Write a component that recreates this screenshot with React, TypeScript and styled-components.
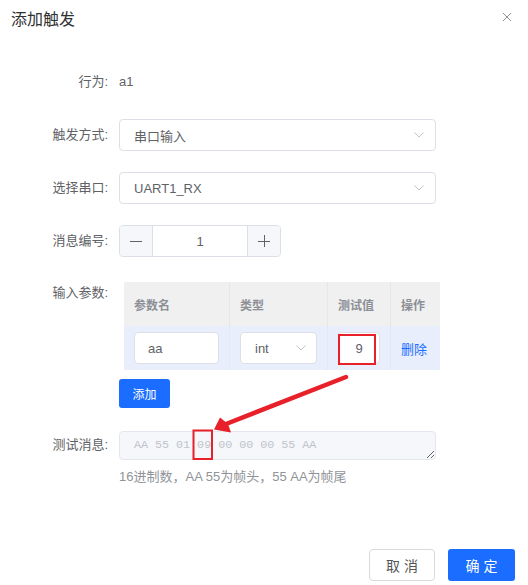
import React from "react";
import styled, { createGlobalStyle } from "styled-components";

const GlobalStyle = createGlobalStyle`
  html, body {
    margin: 0;
    padding: 0;
    background: #fff;
  }
  body {
    font-family: "Liberation Sans", Arial, "Noto Sans CJK SC", sans-serif;
  }
  * {
    box-sizing: border-box;
  }
`;

const BLUE = "#1a6dff";

const Dialog = styled.div`
  position: relative;
  width: 528px;
  height: 585px;
  display: flex;
  flex-direction: column;
  background: #fff;
  overflow: hidden;
`;

const Header = styled.div`
  display: flex;
  justify-content: space-between;
  align-items: flex-start;
  height: 30px;
  padding: 10px 16px 0 11px;
`;

const Title = styled.div`
  font-size: 16px;
  line-height: 20px;
  color: #303133;
`;

const CloseBtn = styled.div`
  margin-top: 2px;
  width: 10px;
  height: 10px;
  display: flex;
`;

const Body = styled.div`
  flex: 1;
  padding-top: 36px;
`;

const FormRow = styled.div<{ $top?: boolean; $mb?: number }>`
  display: flex;
  align-items: ${(p) => (p.$top ? "flex-start" : "center")};
  margin-bottom: ${(p) => p.$mb ?? 21}px;
`;

const Label = styled.div`
  width: 119px;
  flex-shrink: 0;
  padding-right: 11px;
  text-align: right;
  font-size: 13px;
  line-height: 32px;
  color: #606266;
`;

const Value = styled.div`
  font-size: 13px;
  line-height: 32px;
  color: #606266;
`;

const Select = styled.div<{ $width: number; $pad?: number }>`
  width: ${(p) => p.$width}px;
  height: 32px;
  display: flex;
  align-items: center;
  justify-content: space-between;
  padding: 0 ${(p) => p.$pad ?? 11}px 0 14px;
  background: #fff;
  border: 1px solid #dcdfe6;
  border-radius: 4px;
  font-size: 13px;
  color: #606266;
`;

const Stepper = styled.div`
  width: 162px;
  height: 32px;
  display: flex;
  border: 1px solid #dcdfe6;
  border-radius: 4px;
  overflow: hidden;
`;

const StepBtn = styled.div<{ $side: "left" | "right" }>`
  width: 33px;
  display: flex;
  align-items: center;
  justify-content: center;
  background: #f5f7fa;
  ${(p) => (p.$side === "left" ? "border-right" : "border-left")}: 1px solid #dcdfe6;
`;

const StepValue = styled.div`
  flex: 1;
  display: flex;
  align-items: center;
  justify-content: center;
  font-size: 13px;
  color: #606266;
`;

const Column = styled.div`
  display: flex;
  flex-direction: column;
  align-items: flex-start;
  padding-top: 5px;
`;

const Table = styled.div`
  margin-left: 5px;
  display: grid;
  grid-template-columns: 106px 98px 63px 49px;
`;

const HeadCell = styled.div<{ $last?: boolean }>`
  height: 44px;
  display: flex;
  align-items: center;
  padding-left: 10px;
  background: #f0f0f0;
  border-right: ${(p) => (p.$last ? "none" : "1px solid #e6e6e6")};
  font-size: 12px;
  font-weight: bold;
  color: #8c8f96;
`;

const Cell = styled.div<{ $last?: boolean; $pad?: number }>`
  height: 44px;
  display: flex;
  align-items: center;
  padding: 0 ${(p) => p.$pad ?? 10}px;
  background: #e8eefc;
  border-right: ${(p) => (p.$last ? "none" : "1px solid #e1e8f8")};
`;

const TextInput = styled.div<{ $center?: boolean }>`
  width: 100%;
  height: 32px;
  display: flex;
  align-items: center;
  justify-content: ${(p) => (p.$center ? "center" : "flex-start")};
  padding: ${(p) => (p.$center ? "0" : "0 13px")};
  background: #fff;
  border: 1px solid #dcdfe6;
  border-radius: 4px;
  font-size: 13px;
  color: #606266;
`;

const LinkText = styled.span`
  font-size: 13px;
  color: ${BLUE};
`;

const PrimaryBtn = styled.button<{ $w: number; $h: number; $fs: number }>`
  width: ${(p) => p.$w}px;
  height: ${(p) => p.$h}px;
  border: none;
  border-radius: 3px;
  background: ${BLUE};
  color: #fff;
  font-family: inherit;
  font-size: ${(p) => p.$fs}px;
  padding: 0;
`;

const AddBtn = styled(PrimaryBtn)`
  margin-top: 9px;
`;

const GhostBtn = styled.button`
  width: 66px;
  height: 32px;
  border: 1px solid #d9d9d9;
  border-radius: 4px;
  background: #fff;
  color: #555;
  font-family: inherit;
  font-size: 14px;
  padding: 0;
`;

const MsgArea = styled.textarea`
  width: 317px;
  height: 29px;
  padding: 4px 14px;
  background: #f5f7fa;
  border: 1px solid #e4e7ed;
  border-radius: 4px;
  font-family: "Liberation Mono", "DejaVu Sans Mono", monospace;
  font-size: 11.7px;
  line-height: 18px;
  color: #c0c4cc;
  -webkit-text-fill-color: #c0c4cc;
  overflow: hidden;
  outline: none;
  resize: vertical;
`;

const Hint = styled.div`
  margin: 6px 0 0 119px;
  font-size: 13px;
  line-height: 20px;
  color: #909399;
`;

const Footer = styled.div`
  display: flex;
  justify-content: flex-end;
  gap: 13px;
  padding: 0 13px 4px;
`;

const Overlay = styled.svg`
  position: absolute;
  left: 0;
  top: 0;
  pointer-events: none;
`;

const Chevron = () => (
  <svg width="10" height="6" viewBox="0 0 10 6">
    <path d="M0.5 0.5 L5 5 L9.5 0.5" fill="none" stroke="#c0c4cc" strokeWidth="1" />
  </svg>
);

const App: React.FC = () => (
  <>
    <GlobalStyle />
    <Dialog>
      <Header>
        <Title>添加触发</Title>
        <CloseBtn>
          <svg width="10" height="10" viewBox="0 0 10 10">
            <path d="M1 1 L9 9 M9 1 L1 9" stroke="#909399" strokeWidth="1" />
          </svg>
        </CloseBtn>
      </Header>
      <Body>
        <FormRow>
          <Label>行为:</Label>
          <Value>a1</Value>
        </FormRow>
        <FormRow>
          <Label>触发方式:</Label>
          <Select $width={317}>
            串口输入
            <Chevron />
          </Select>
        </FormRow>
        <FormRow>
          <Label>选择串口:</Label>
          <Select $width={317}>
            UART1_RX
            <Chevron />
          </Select>
        </FormRow>
        <FormRow $mb={20}>
          <Label>消息编号:</Label>
          <Stepper>
            <StepBtn $side="left">
              <svg width="12" height="12" viewBox="0 0 12 12">
                <path d="M0 6.5 H12" stroke="#606266" strokeWidth="1" />
              </svg>
            </StepBtn>
            <StepValue>1</StepValue>
            <StepBtn $side="right">
              <svg width="12" height="12" viewBox="0 0 12 12">
                <path d="M0 6.5 H12 M6.5 0 V12" stroke="#606266" strokeWidth="1" />
              </svg>
            </StepBtn>
          </Stepper>
        </FormRow>
        <FormRow $top $mb={21}>
          <Label>输入参数:</Label>
          <Column>
            <Table>
              <HeadCell>参数名</HeadCell>
              <HeadCell>类型</HeadCell>
              <HeadCell>测试值</HeadCell>
              <HeadCell $last>操作</HeadCell>
              <Cell>
                <TextInput>aa</TextInput>
              </Cell>
              <Cell>
                <Select $width={78} $pad={10}>
                  int
                  <Chevron />
                </Select>
              </Cell>
              <Cell>
                <TextInput $center>9</TextInput>
              </Cell>
              <Cell $last>
                <LinkText>删除</LinkText>
              </Cell>
            </Table>
            <AddBtn $w={51} $h={29} $fs={12}>
              添加
            </AddBtn>
          </Column>
        </FormRow>
        <FormRow $mb={0}>
          <Label>测试消息:</Label>
          <MsgArea readOnly value="AA 55 01 09 00 00 00 55 AA" />
        </FormRow>
        <Hint>16进制数，AA 55为帧头，55 AA为帧尾</Hint>
      </Body>
      <Footer>
        <GhostBtn>取 消</GhostBtn>
        <PrimaryBtn $w={67} $h={32} $fs={14}>
          确 定
        </PrimaryBtn>
      </Footer>
      <Overlay width="528" height="585" viewBox="0 0 528 585">
        <rect x="339" y="335" width="36" height="29" fill="none" stroke="#e8202a" strokeWidth="2" />
        <rect x="193.5" y="430.5" width="18.5" height="28.5" fill="none" stroke="#e8202a" strokeWidth="2" />
        <line x1="346" y1="377" x2="226" y2="424" stroke="#e8202a" strokeWidth="4.5" strokeLinecap="round" />
        <polygon points="214,429.5 220,417.5 228,424 231,432.5" fill="#e8202a" />
      </Overlay>
    </Dialog>
  </>
);

export default App;
